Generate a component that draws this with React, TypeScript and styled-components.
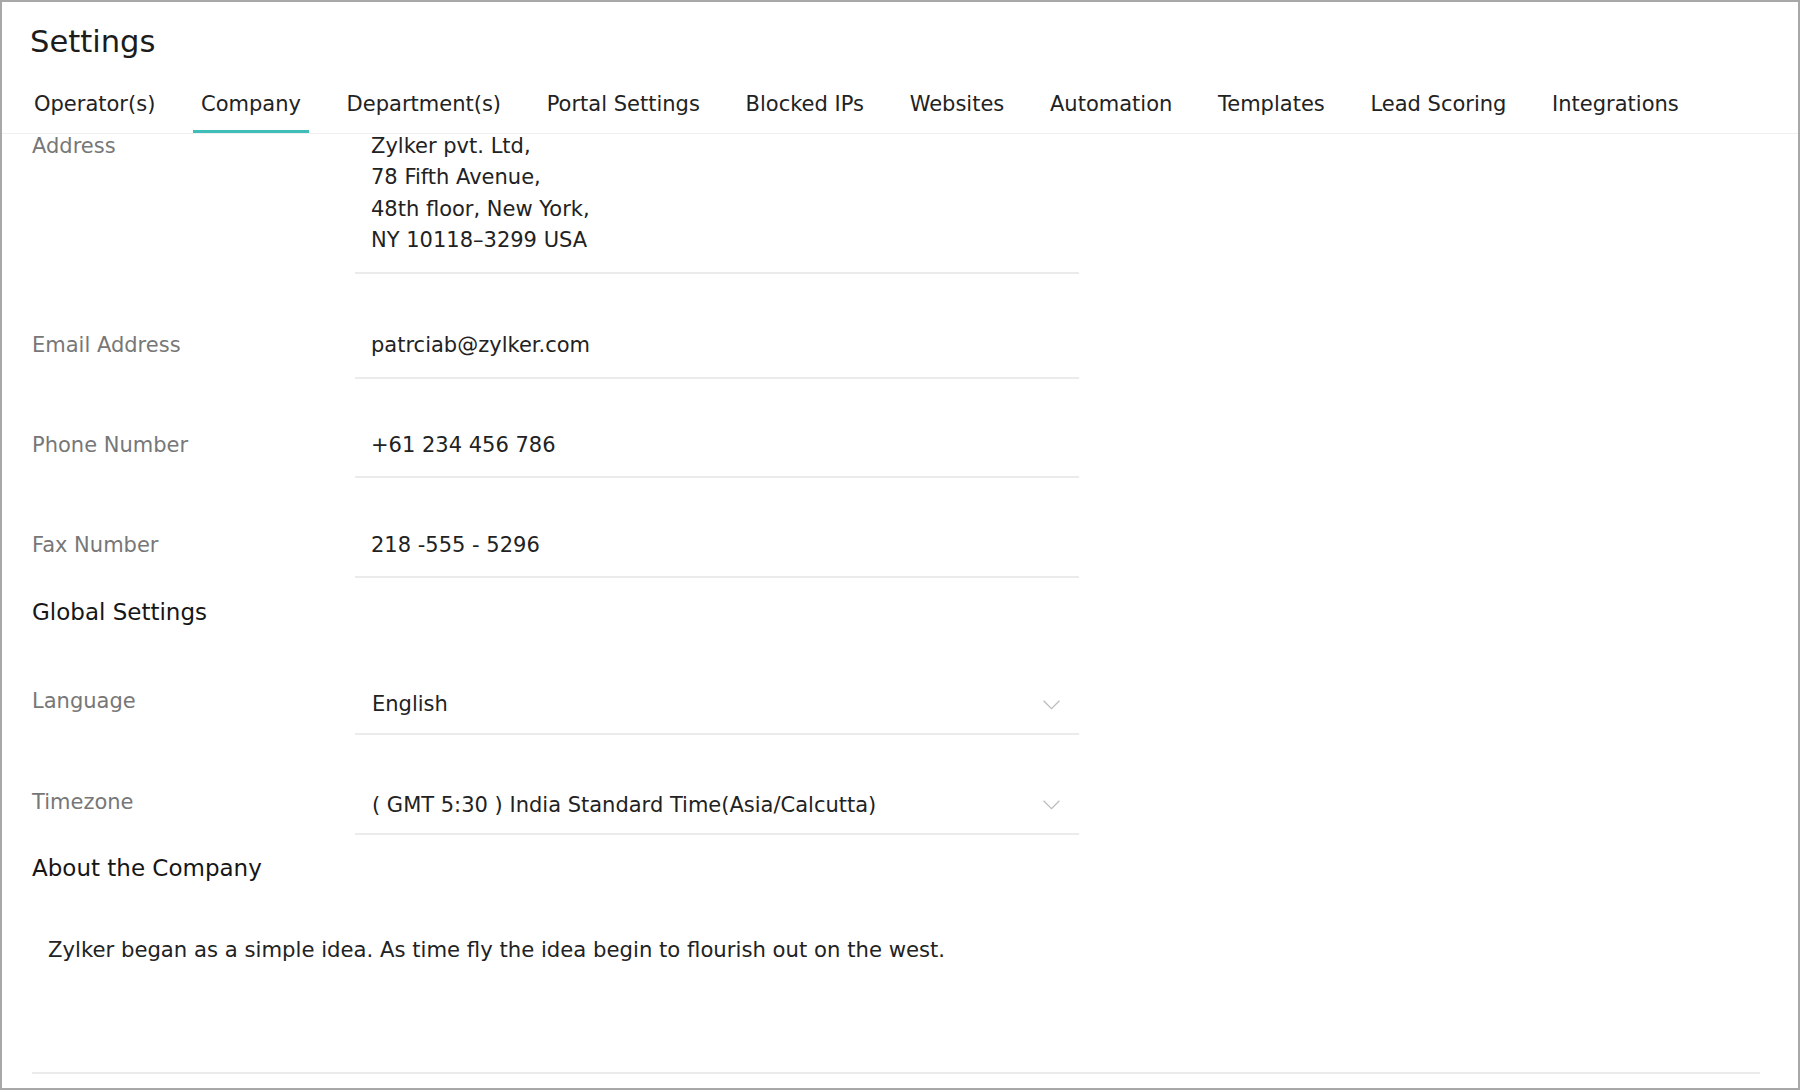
import React from 'react';
import styled, { createGlobalStyle } from 'styled-components';

const TABS = [
  'Operator(s)',
  'Company',
  'Department(s)',
  'Portal Settings',
  'Blocked IPs',
  'Websites',
  'Automation',
  'Templates',
  'Lead Scoring',
  'Integrations',
];

const ADDRESS = ['Zylker pvt. Ltd,', '78 Fifth Avenue,', '48th floor, New York,', 'NY 10118–3299 USA'];

const Chevron = () => (
  <svg width="17" height="10" viewBox="0 0 17 10" fill="none">
    <polyline points="0.6,0.8 8.5,8.7 16.4,0.8" stroke="#bdbdbd" strokeWidth="1.3" />
  </svg>
);

export default function App() {
  return (
    <>
      <GlobalStyle />
      <Frame>
        <Header>
          <Title>Settings</Title>
          <TabList>
            {TABS.map((tab) => (
              <Tab key={tab} $active={tab === 'Company'}>
                {tab}
              </Tab>
            ))}
          </TabList>
        </Header>

        <Content>
          <FieldRow>
            <Label>Address</Label>
            <Value>
              {ADDRESS.map((line) => (
                <div key={line}>{line}</div>
              ))}
            </Value>
          </FieldRow>

          <FieldRow $gap={56.5}>
            <Label>Email Address</Label>
            <Value>patrciab@zylker.com</Value>
          </FieldRow>

          <FieldRow $gap={51.5}>
            <Label>Phone Number</Label>
            <Value>+61 234 456 786</Value>
          </FieldRow>

          <FieldRow $gap={51.5}>
            <Label>Fax Number</Label>
            <Value>218 -555 - 5296</Value>
          </FieldRow>

          <SectionTitle>Global Settings</SectionTitle>

          <FieldRow $gap={51.5}>
            <Label>Language</Label>
            <SelectValue>
              <span>English</span>
              <Chevron />
            </SelectValue>
          </FieldRow>

          <FieldRow $gap={51.5}>
            <Label>Timezone</Label>
            <SelectValue>
              <span>( GMT 5:30 ) India Standard Time(Asia/Calcutta)</span>
              <Chevron />
            </SelectValue>
          </FieldRow>

          <SectionTitle $top={18}>About the Company</SectionTitle>

          <AboutBox>
            Zylker began as a simple idea. As time fly the idea begin to flourish out on the west.
          </AboutBox>
        </Content>
      </Frame>
    </>
  );
}

const GlobalStyle = createGlobalStyle`
  html, body {
    margin: 0;
    padding: 0;
    background: #ffffff;
  }

  body {
    font-family: 'DejaVu Sans', 'Liberation Sans', sans-serif;
    color: #222222;
  }

  * {
    box-sizing: border-box;
  }
`;

const Frame = styled.div`
  display: flex;
  flex-direction: column;
  width: 1800px;
  height: 1090px;
  border: 2px solid #a8a8a8;
  background: #ffffff;
  overflow: hidden;
`;

const Header = styled.header`
  flex-shrink: 0;
  border-bottom: 1.5px solid #efefef;
`;

const Title = styled.h1`
  margin: 0;
  padding: 22px 0 0 28px;
  font-size: 30.6px;
  line-height: 36px;
  font-weight: 400;
  color: #1c1c1c;
`;

const TabList = styled.nav`
  display: flex;
  gap: 29.7px;
  margin-top: 32px;
  padding-left: 24px;
`;

const Tab = styled.div<{ $active?: boolean }>`
  padding: 0 8px 14px;
  font-size: 21px;
  line-height: 24px;
  color: #222222;
  white-space: nowrap;
  border-bottom: 3px solid ${({ $active }) => ($active ? '#3fbdb8' : 'transparent')};
  cursor: pointer;
`;

const Content = styled.main`
  display: flex;
  flex-direction: column;
  flex-shrink: 0;
  margin-top: -3px;
  padding: 0 38px 0 30px;
`;

const FieldRow = styled.div<{ $gap?: number }>`
  display: flex;
  margin-top: ${({ $gap }) => $gap ?? 0}px;
  font-size: 21px;
  line-height: 31.4px;
`;

const Label = styled.div`
  width: 323px;
  flex-shrink: 0;
  color: #777777;
`;

const Value = styled.div`
  width: 724px;
  padding: 0 16px 15px;
  border-bottom: 2px solid #ebebeb;
  color: #222222;
`;

const SelectValue = styled(Value)`
  display: flex;
  align-items: center;
  justify-content: space-between;
  padding: 3px 19px 12.3px 17px;
`;

const SectionTitle = styled.h2<{ $top?: number }>`
  margin: ${({ $top }) => $top ?? 19}px 0 7.5px;
  font-size: 23px;
  line-height: 30px;
  font-weight: 400;
  color: #161616;
`;

const AboutBox = styled.div`
  height: 183.5px;
  padding: 43px 16px 0;
  border-bottom: 2px solid #ebebeb;
  font-size: 21.2px;
  line-height: 31.4px;
  color: #222222;
`;
